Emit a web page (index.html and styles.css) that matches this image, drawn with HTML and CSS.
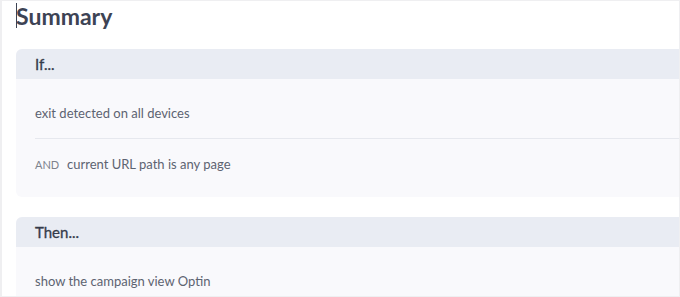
FILE: index.html
```html
<!DOCTYPE html>
<html lang="en">
<head>
  <meta charset="UTF-8" />
  <meta name="viewport" content="width=device-width, initial-scale=1.0" />
  <title>Summary</title>
  <link rel="stylesheet" href="styles.css">
</head>
<body>
  <div class="panel">
    <h2 class="title"><span class="caret"></span>Summary</h2>

    <!-- conditions -->
    <div class="card">
      <div class="card-head">If...</div>
      <div class="card-body">
        <div class="rule">exit detected on all devices</div>
        <div class="rule"><span class="op">AND</span>current URL path is any page</div>
      </div>
    </div>

    <!-- actions -->
    <div class="card">
      <div class="card-head">Then...</div>
      <div class="card-body">
        <div class="rule">show the campaign view Optin</div>
      </div>
    </div>
  </div>
</body>
</html>
```

FILE: styles.css
```css
html, body {
  margin: 0;
  height: 100%;
}
body {
  font-family: Lato, "Open Sans", Arial, sans-serif;
  background: #efeff1;
  padding: 1px 1px 1px 2px;
  box-sizing: border-box;
}
.panel {
  background: #fff;
  height: 100%;
  overflow: hidden;
  padding-left: 14px;
}
.title {
  position: relative;
  margin: 0;
  padding-top: 2px;
  height: 46px;
  font-size: 23px;
  font-weight: 700;
  color: #3d4354;
  line-height: 26px;
}
.caret {
  position: absolute;
  left: 0;
  top: 2px;
  width: 1px;
  height: 25px;
  background: #3d4354;
}
.card {
  margin-right: -40px;
  margin-bottom: 20px;
  border-radius: 6px;
  overflow: hidden;
  background: #f9f9fc;
}
.card-head {
  height: 30px;
  line-height: 30px;
  padding-left: 19px;
  background: #e9ecf3;
  font-size: 15px;
  font-weight: 400;
  color: #353b4a;
  -webkit-text-stroke: 0.3px #353b4a;
}
.card-body {
  padding: 9px 0 8px 19px;
}
.rule {
  height: 50px;
  line-height: 50px;
  font-size: 13px;
  color: #5d6371;
}
.rule + .rule {
  border-top: 1px solid #e6e8ee;
}
.op {
  display: inline-block;
  width: 32px;
  font-size: 11px;
  font-weight: 400;
  color: #7d828d;
}
```
